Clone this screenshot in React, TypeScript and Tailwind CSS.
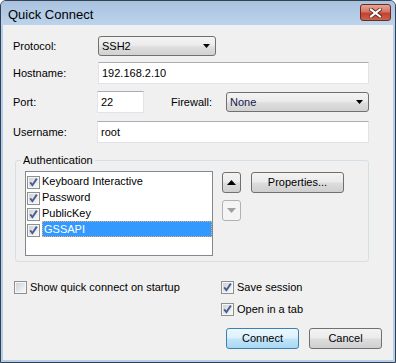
import React from "react";

const comboBg =
  "bg-[linear-gradient(#f3f3f3,#ececec_45%,#dedede_55%,#d2d2d2)]";
const btnBg =
  "bg-[linear-gradient(#f3f3f3,#ebebeb_48%,#dddddd_52%,#cfcfcf)]";

function CheckBox({ checked }: { checked?: boolean }) {
  return (
    <svg width="13" height="13" viewBox="0 0 13 13" className="shrink-0">
      <defs>
        <linearGradient id="cbfill" x1="0" y1="0" x2="1" y2="1">
          <stop offset="0" stopColor="#cfd2d7" />
          <stop offset="1" stopColor="#f8f8f8" />
        </linearGradient>
      </defs>
      <rect x="0.5" y="0.5" width="12" height="12" fill="#f6f6f6" stroke="#8e8f8f" />
      <rect x="2" y="2" width="9" height="9" fill="url(#cbfill)" />
      {checked && (
        <path
          d="M3.2 6.4 L5.4 9.2 L9.8 2.6"
          stroke="#4a5d93"
          strokeWidth="1.9"
          fill="none"
        />
      )}
    </svg>
  );
}

function Combo({ value, className }: { value: string; className: string }) {
  return (
    <div
      className={`flex h-[20px] items-center justify-between rounded-[3px] border border-[#707070] pl-[3px] pr-[5px] ${comboBg} ${className}`}
    >
      <span>{value}</span>
      <svg width="7" height="4" viewBox="0 0 7 4">
        <path d="M0 0 H7 L3.5 4 Z" fill="#000" />
      </svg>
    </div>
  );
}

function TextBox({ value, className }: { value: string; className: string }) {
  return (
    <div
      className={`flex h-[22px] items-center border border-[#e2e3ea] border-t-[#abadb3] bg-white pl-[3px] ${className}`}
    >
      {value}
    </div>
  );
}

function Button({
  children,
  className,
  primary,
}: {
  children: React.ReactNode;
  className: string;
  primary?: boolean;
}) {
  return (
    <div
      className={`flex items-center justify-center rounded-[3px] border ${
        primary
          ? "border-[#3c7fb1] bg-[linear-gradient(#ecf7fd,#dcf1fc_48%,#c1e5f9_52%,#a9d9f3)]"
          : `border-[#707070] ${btnBg}`
      } ${className}`}
    >
      {children}
    </div>
  );
}

const methods = ["Keyboard Interactive", "Password", "PublicKey", "GSSAPI"];

export default function App() {
  return (
    <div className="h-[363px] w-[396px] bg-white font-['Liberation_Sans',Arial,sans-serif] text-[11px] leading-[13px] text-black">
      <div className="flex h-full flex-col rounded-t-[6px] border border-[#33404f] bg-[#b4cfec]">
        {/* title bar */}
        <div className="flex h-[24px] shrink-0 items-start justify-between rounded-t-[5px] bg-[linear-gradient(#a9c2df,#bcd3ec)] pl-[7px] pr-[4px]">
          <span className="pt-[6px] text-[13px] leading-[16px]">Quick Connect</span>
          <div className="mt-[3px] flex h-[17px] w-[31px] items-center justify-center rounded-[3px] border border-[#6b2a22] bg-[linear-gradient(#e7a596,#d47563_45%,#c2432f_55%,#c9624c)]">
            <svg width="13" height="10" viewBox="0 0 13 10">
              <path
                d="M2 1.5 L11 8.5 M11 1.5 L2 8.5"
                stroke="#4b1e18"
                strokeWidth="3.6"
                strokeLinecap="square"
              />
              <path
                d="M2 1.5 L11 8.5 M11 1.5 L2 8.5"
                stroke="#fff"
                strokeWidth="2.2"
                strokeLinecap="square"
              />
            </svg>
          </div>
        </div>

        {/* client area */}
        <div className="mx-[2px] mb-[2px] flex flex-1 flex-col bg-[#f0f0f0] pl-[10px]">
          <div className="mt-[11px] flex h-[20px] items-center">
            <span className="w-[85px]">Protocol:</span>
            <Combo value="SSH2" className="w-[118px]" />
          </div>
          <div className="mt-[6px] flex h-[22px] items-center">
            <span className="w-[85px]">Hostname:</span>
            <TextBox value="192.168.2.10" className="w-[271px]" />
          </div>
          <div className="mt-[7px] flex h-[22px] items-center">
            <span className="w-[84px]">Port:</span>
            <TextBox value="22" className="w-[47px]" />
            <span className="ml-[27px] w-[55px]">Firewall:</span>
            <Combo value="None" className="w-[143px] text-[#15174f]" />
          </div>
          <div className="mt-[8px] flex h-[22px] items-center">
            <span className="w-[84px]">Username:</span>
            <TextBox value="root" className="w-[272px]" />
          </div>

          <fieldset className="mt-[10px] ml-[2px] w-[354px] rounded-[3px] border border-[#d5dfe5] pt-[4px] pb-[5px] pl-[9px]">
            <legend className="-ml-[4px] px-[2px] leading-[14px]">Authentication</legend>
            <div className="flex items-start">
              <div className="h-[85px] w-[188px] border border-[#828790] bg-white pt-[1px] pl-[1px]">
                {methods.map((m, i) => (
                  <div key={m} className="flex h-[16px] items-center gap-[2px]">
                    <div className="mt-[2px]">
                      <CheckBox checked />
                    </div>
                    {i === 3 ? (
                      <span className="flex h-[16px] flex-1 items-center border border-dotted border-[#e8b070] bg-[#3399ff] pl-[1px] text-white">
                        {m}
                      </span>
                    ) : (
                      <span>{m}</span>
                    )}
                  </div>
                ))}
              </div>
              <div className="mt-[1px] ml-[9px] flex flex-col gap-[7px]">
                <Button className="h-[21px] w-[19px]">
                  <svg width="9" height="5" viewBox="0 0 9 5">
                    <path d="M0 5 L4.5 0 L9 5 Z" fill="#000" />
                  </svg>
                </Button>
                <div className="flex h-[21px] w-[19px] items-center justify-center rounded-[3px] border border-[#adb2b5] bg-[#f4f4f4]">
                  <svg width="9" height="5" viewBox="0 0 9 5">
                    <path d="M0 0 L9 0 L4.5 5 Z" fill="#a0a0a0" />
                  </svg>
                </div>
              </div>
              <Button className="mt-[1px] ml-[10px] h-[21px] w-[93px]">Properties...</Button>
            </div>
          </fieldset>

          <div className="mt-[19px] flex">
            <div className="ml-[1px] flex h-[13px] w-[207px] items-center gap-[3px]">
              <CheckBox />
              <span>Show quick connect on startup</span>
            </div>
            <div className="flex flex-col">
              <div className="flex h-[13px] items-center gap-[3px]">
                <CheckBox checked />
                <span>Save session</span>
              </div>
              <div className="mt-[9px] flex h-[13px] items-center gap-[3px]">
                <CheckBox checked />
                <span>Open in a tab</span>
              </div>
              <div className="mt-[12px] ml-[5px] flex gap-[10px]">
                <Button primary className="h-[21px] w-[73px]">
                  Connect
                </Button>
                <Button className="h-[21px] w-[73px]">Cancel</Button>
              </div>
            </div>
          </div>
        </div>
      </div>
    </div>
  );
}
